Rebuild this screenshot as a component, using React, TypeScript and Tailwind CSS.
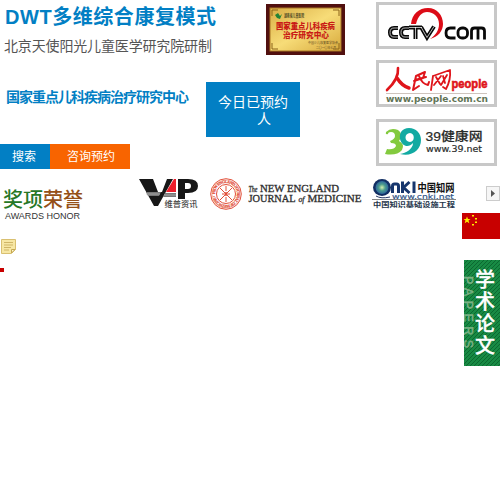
import React from "react";

const cjk = "font-['Liberation_Sans','Noto_Sans_CJK_SC',sans-serif]";

type FitProps = React.SVGProps<SVGTextElement> & { w: number };

function Fit({ w, children, ...rest }: FitProps) {
  return (
    <text textLength={w} lengthAdjust="spacingAndGlyphs" {...rest}>
      {children}
    </text>
  );
}

function Plaque() {
  return (
    <svg width="79" height="51" viewBox="0 0 79 51" className={`block ${cjk}`}>
      <defs>
        <linearGradient id="gold" x1="0" y1="0" x2="1" y2="1">
          <stop offset="0" stopColor="#d9ae45" />
          <stop offset=".5" stopColor="#f7dc78" />
          <stop offset="1" stopColor="#d7a83b" />
        </linearGradient>
      </defs>
      <rect width="79" height="51" fill="#51100f" />
      <rect x="4" y="4" width="71" height="43" fill="url(#gold)" stroke="#a87525" />
      <path d="M6 12V6h6M67 6h6v6M6 39v6h6M67 45h6v-6" fill="none" stroke="#8d651b" />
      <path d="m9 11 3-2 2 3 2-2-2 5-3-1z" fill="#248336" />
      <Fit x="18" y="13" w={20} fontSize="4.500" fill="#4d4824" fontWeight="bold">湖南省儿童医院</Fit>
      <Fit x="10" y="25" w={59} fontSize="8.500" fill="#c91c16" fontWeight="900">国家重点儿科疾病</Fit>
      <Fit x="17" y="34" w={46} fontSize="8.500" fill="#c91c16" fontWeight="900">治疗研究中心</Fit>
      <Fit x="42" y="40" w={30} fontSize="3.500" fill="#624b20">中国少儿康复医学协会</Fit>
      <Fit x="50" y="44.500" w={20} fontSize="3.500" fill="#624b20">二〇一〇年七月</Fit>
    </svg>
  );
}

function CctvLogo() {
  return (
    <svg width="115" height="41" viewBox="379 5 115 41">
      <path d="M411 24c1-10 8-16 17-16 9 0 15 7 15 16 0 7-5 13-13 15 6-4 9-9 9-15 0-7-5-12-12-12-5 0-9 4-11 12z" fill="#dc0c17" />
      <g fill="none" stroke="#090909" strokeWidth="4">
        <path id="cctvInitials" d="M398 28h-4q-4 0-4 4.500t4 4.500h4M409 28h-4q-4 0-4 4.500t4 4.500h4M409 27.500h13M415.500 27v12M421 27l6 10.500 7-11" />
      </g>
      <path d="M398 28h-4q-4 0-4 4.500t4 4.500h4M409 28h-4q-4 0-4 4.500t4 4.500h4M409 27.500h13M415.500 27v12M421 27l6 10.500 7-11" fill="none" stroke="#fff" strokeWidth=".7" />
      <g fill="none" stroke="#090909" strokeWidth="2.800">
        <path d="M455.500 28h-5q-4.500 0-4.500 5t4.500 5h5" />
        <rect x="458" y="28" width="9.500" height="10" rx="4" />
        <path d="M471.500 39.500V31q0-3 3-3h7q3 0 3 3v8.500M478 28v11.500" />
      </g>
    </svg>
  );
}

function PeopleLogo() {
  return (
    <svg width="115" height="41" viewBox="379 63 115 41">
      <g fill="none" stroke="#df151b" strokeLinecap="round" strokeLinejoin="round">
        <path d="M398 68q1 11-11 22" strokeWidth="2.600" />
        <path d="M397 78q5 8 12 10" strokeWidth="3.400" />
        <path d="m416 76 9-4-2 6-9 3m2-5-3 14 6-4m-4-6 11-3m-7-1q3 8 9 9l1-3" strokeWidth="2" />
        <path d="m433 76-2 14m2-14 17-6q1 10-4 19l-3-2M436 77l4 7m1-8-7 9m9-9 2 7m2-8-6 10" strokeWidth="1.800" />
      </g>
      <Fit x="451.500" y="88" w={36} fontFamily="Liberation Sans" fontSize="12" fontWeight="900" fill="#df151b" stroke="#df151b" strokeWidth=".6">people</Fit>
      <path d="M386 93.500h101" stroke="#b9aaa0" strokeWidth=".7" />
      <Fit x="386" y="102" w={102} fontFamily="DejaVu Sans" fontSize="8.500" fontWeight="bold" fill="#617456">www.people.com.cn</Fit>
    </svg>
  );
}

function HealthLogo() {
  return (
    <svg width="115" height="41" viewBox="379 122 115 41">
      <path d="M386 132q5-5 12-2 6 4 1 11 6 3 3 9-5 6-17 4l2-5q7 1 9-3 0-3-5-3l-1-2q5-2 5-5 0-4-4-4-3 0-3 2-3 1-2-2z" fill="#83ca3e" />
      <path d="M409 128c-7 0-10 5-9 11 2 8 9 9 13 4 0 6-7 10-13 11 12 3 21-4 21-14 0-7-5-12-12-12zm1 5c5 0 5 9 0 9-6 0-6-9 0-9z" fill="#12aaa2" fillRule="evenodd" />
      <Fit x="425.500" y="141" w={57} className={cjk} fontSize="12.500" fontWeight="500" fill="#292c2a" stroke="#292c2a" strokeWidth=".2">39健康网</Fit>
      <Fit x="426" y="152" w={56} fontFamily="DejaVu Sans" fontSize="9.500" fill="#292c2a" stroke="#292c2a" strokeWidth=".2">www.39.net</Fit>
    </svg>
  );
}

function VipLogo() {
  return (
    <svg width="60" height="31" viewBox="139 177 60 31" className={cjk}>
      <path d="M139 179h14l5 13h4l5-13h6l-15 27h-4z" fill="#171717" />
      <path d="m166 192 8-13h2v13z" fill="#ed1e2b" />
      <path d="M178 179h10q10 0 10 7t-10 7h-3v6h-7zm7 4v6h3q3 0 3-3t-3-3z" fill="#171717" fillRule="evenodd" />
      <path d="M146 192h15l-2 4h-11zM165 193h11v4h-13z" fill="#777" />
      <path d="M146 194h14M164 195h12" stroke="#bbb" strokeWidth=".7" />
      <Fit x="164.500" y="206.500" w={33} fontSize="8" fontWeight="500" fill="#464646">维普资讯</Fit>
    </svg>
  );
}

function JournalLogo() {
  return (
    <svg width="154" height="34" viewBox="209 177 154 34">
      <defs>
        <path id="sealPath" d="M215 194a11 11 0 1 1 22 0a11 11 0 1 1-22 0" />
      </defs>
      <g fill="none" stroke="#e2513b" strokeWidth="1">
        <circle cx="226" cy="194" r="15.300" />
        <circle cx="226" cy="194" r="14" strokeWidth=".4" />
        <circle cx="226" cy="194" r="9.500" />
        <path d="m220 188 12 12m0-12-12 12M226 186v5m0 6v5M222 194h8m-5-2 2 4m0-4-2 4" />
      </g>
      <text fontSize="4" fill="#e2513b" stroke="#e2513b" strokeWidth=".2" fontFamily="Liberation Serif" fontWeight="bold">
        <textPath href="#sealPath" textLength="67">NEW ENGLAND JOURNAL OF MEDICINE •</textPath>
      </text>
      <g fontFamily="Liberation Serif" fill="#303030" stroke="#303030" strokeWidth=".3">
        <Fit x="248.500" y="192" w={9} fontSize="8" fontStyle="italic">The</Fit>
        <Fit x="260" y="192" w={79} fontSize="9.500">NEW ENGLAND</Fit>
        <Fit x="248.500" y="202" w={47} fontSize="9.500">JOURNAL</Fit>
        <Fit x="298.500" y="202" w={6} fontSize="8" fontStyle="italic">of</Fit>
        <Fit x="307.500" y="202" w={54} fontSize="9.500">MEDICINE</Fit>
      </g>
    </svg>
  );
}

function CnkiLogo() {
  return (
    <svg width="84" height="34" viewBox="372 177 84 34" className={cjk}>
      <defs>
        <radialGradient id="globe">
          <stop stopColor="#d4efad" />
          <stop offset=".5" stopColor="#4c9c8d" />
          <stop offset="1" stopColor="#2d679b" />
        </radialGradient>
      </defs>
      <ellipse cx="382" cy="187.500" rx="9" ry="8.500" fill="#122f63" />
      <circle cx="382" cy="187.500" r="6.500" fill="url(#globe)" />
      <path d="M376 196q5 3 14 1" fill="none" stroke="#263865" />
      <g fill="none" stroke="#17366d" strokeWidth="3">
        <path d="M392.500 193v-7q0-2 2-2h2q2 0 2 2v7M402.500 181.500v11.500M409.500 182l-6 5.500 6 5.500M414 181.500v11.500" />
      </g>
      <Fit x="417.500" y="191.500" w={37} fontSize="11" fontWeight="bold" fill="#111">中国知网</Fit>
      <Fit x="392" y="198.500" w={62} fontFamily="DejaVu Sans" fontSize="7" fill="#294f84" stroke="#294f84" strokeWidth=".15">www.cnki.net</Fit>
      <path d="M372 199.500h84" stroke="#333" strokeWidth=".6" />
      <Fit x="373" y="206.500" w={82} fontSize="6.500" fontWeight="bold" fill="#25364b">中国知识基础设施工程</Fit>
    </svg>
  );
}

function Flag() {
  return (
    <svg width="38" height="26" viewBox="0 0 38 26" className="block">
      <path fill="#c80000" d="M0 0h38v26H0z" />
      <path fill="#ffed00" d="m5 3.500 1 2.500h2.500l-2 1.600.8 2.600L5 8.700l-2.300 1.500.8-2.600L1.500 6H4zM10 2h2v1.500h-2zm3 3h2v1.500h-2zm0 3.500h2V10h-2zm-3 2.500h2v1.500h-2z" />
    </svg>
  );
}

function Note() {
  return (
    <svg width="15" height="15" viewBox="0 0 15 15" className="block">
      <path d="M.5.500h14v10l-4 4H.5z" fill="#f7e7a4" stroke="#d9c071" />
      <path d="M3 3.500h9M3 6h9M3 8.500h7M3 11h5" stroke="#cfb567" />
      <path d="M10.500 14v-3.500H14z" fill="#fff7ce" stroke="#c5a853" />
    </svg>
  );
}

function Papers() {
  return (
    <svg width="36" height="106" viewBox="0 0 36 106" className={`block ${cjk}`}>
      <defs>
        <pattern id="stripe" width="4" height="4" patternUnits="userSpaceOnUse">
          <path fill="#188a44" d="M0 0h4v4H0z" />
          <path d="M-1 1 1-1M0 4 4 0M3 5 5 3" stroke="#08602b" strokeWidth=".8" />
        </pattern>
      </defs>
      <path fill="url(#stripe)" d="M0 0h36v106H0z" />
      <text transform="translate(0 16) rotate(90)" textLength="72" fontSize="12.500" fill="#7bb184" stroke="#7bb184" strokeWidth=".5">PAPERS</text>
      <g fill="#fff" fontSize="20" fontWeight="500" stroke="#fff" strokeWidth=".3">
        <text x="11" y="27">学</text>
        <text x="11" y="49">术</text>
        <text x="11" y="71">论</text>
        <text x="11" y="93">文</text>
      </g>
    </svg>
  );
}

const frame = "h-[47px] w-[121px] border-[3px] border-[#c8c8c8] bg-white";

export default function App() {
  return (
    <main className={`h-[500px] w-[500px] overflow-hidden bg-white ${cjk}`}>
      <section className="flex h-[177px]">
        <div className="w-[376px]">
          <div className="flex h-[82px]">
            <header className="w-[266px] whitespace-nowrap">
              <h1 className="ml-[5px] mt-[4px] h-[27px] text-[20px] leading-[27px] font-bold tracking-[0.55px] text-[#027fc4]">DWT多维综合康复模式</h1>
              <p className="ml-[4px] mt-[4px] text-[14px] leading-[22px] tracking-[-0.15px] text-[#555]">北京天使阳光儿童医学研究院研制</p>
            </header>
            <div className="pt-[4px]"><Plaque /></div>
          </div>
          <div className="flex h-[62px]">
            <h2 className="w-[206px] pl-[6px] pt-[3px] text-[14px] leading-[24px] font-bold tracking-[-1px] whitespace-nowrap text-[#027fc4]">国家重点儿科疾病治疗研究中心</h2>
            <div className="h-[55px] w-[94px] bg-[#027fc4] pt-[12px] text-[14px] leading-[17px] text-white">
              <p className="pl-[12px]">今日已预约</p>
              <p className="pl-[51px]">人</p>
            </div>
          </div>
          <nav className="flex h-[25px] text-[12px] leading-[26px] text-white">
            <button className="h-[25px] w-[50px] bg-[#027fc4] pr-[2px]">搜索</button>
            <button className="h-[25px] w-[80px] bg-[#f86400] pl-[2px]">咨询预约</button>
          </nav>
        </div>
        <aside className="flex w-[121px] flex-col pt-[2px]">
          <div className={frame}><CctvLogo /></div>
          <div className={`mt-[11px] ${frame}`}><PeopleLogo /></div>
          <div className={`mt-[12px] ${frame}`}><HealthLogo /></div>
        </aside>
      </section>

      <section className="flex h-[36px]">
        <div className="w-[139px] pl-[3px] pt-[11px]">
          <svg width="80" height="34" viewBox="3 188 80 34" className="overflow-visible">
            <Fit x="3" y="206.500" w={40} fontSize="20" fontWeight="500" fill="#267726">奖项</Fit>
            <Fit x="43" y="206.500" w={40} fontSize="20" fontWeight="500" fill="#955018">荣誉</Fit>
            <Fit x="5" y="219" w={75} fontSize="9.500" fill="#333">AWARDS HONOR</Fit>
          </svg>
        </div>
        <div className="w-[70px]"><VipLogo /></div>
        <div className="w-[163px]"><JournalLogo /></div>
        <div className="w-[114px]"><CnkiLogo /></div>
        <button className="mt-[9px] flex h-[15px] w-[14px] items-center justify-center border border-[#ccc] bg-[#f6f6f6]">
          <svg width="4" height="7" viewBox="0 0 4 7"><path d="m0 0 4 3.500L0 7z" fill="#555" /></svg>
        </button>
      </section>
      <div className="flex h-[26px] justify-end"><Flag /></div>
      <section className="flex h-[127px] justify-between">
        <div>
          <div className="ml-[1px]"><Note /></div>
          <div className="mt-[14px] h-[4px] w-[4px] bg-[#c80000]" />
        </div>
        <div className="pt-[21px]"><Papers /></div>
      </section>
    </main>
  );
}
